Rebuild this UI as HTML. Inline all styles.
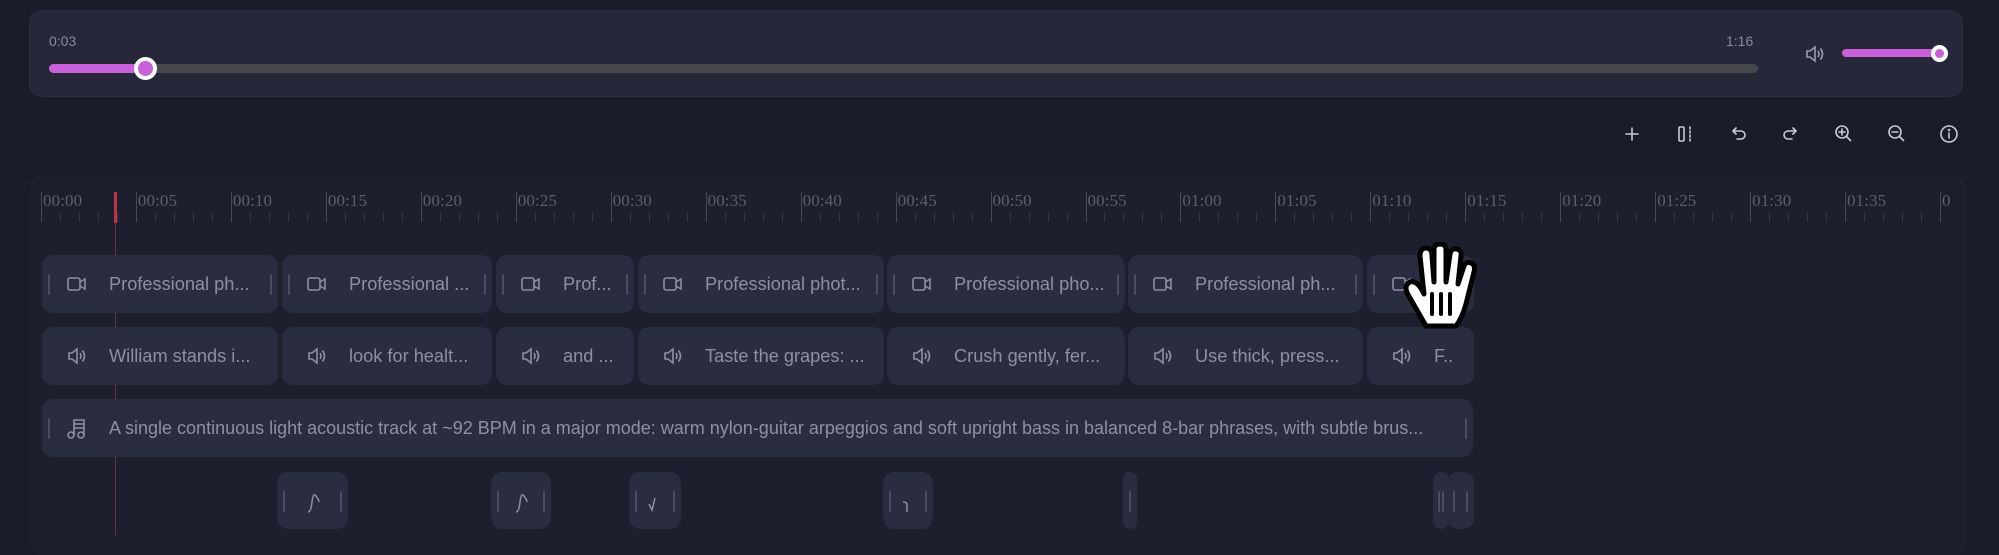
<!DOCTYPE html>
<html><head><meta charset="utf-8"><style>
*{margin:0;padding:0;box-sizing:border-box}
body{width:1999px;height:548px;background:#1b1c29;overflow:hidden;position:relative;font-family:"Liberation Sans","DejaVu Sans",sans-serif}
.abs{position:absolute}
.panel{left:29px;top:10px;width:1934px;height:87px;background:#262839;border:1px solid #2c2e40;border-radius:13px}
.t{color:#8a8c9a;font-size:14px}
.tl{left:29px;top:175px;width:1937px;height:380px;background:#1e1f2e;border-radius:12px}
.lab{position:absolute;top:191px;font-family:"Liberation Serif",serif;font-size:17px;color:#5c5e6e;letter-spacing:0.1px}
.tick{position:absolute;width:1px;background:#45475a}
.clip{position:absolute;background:#2a2c3f;border-radius:11px;height:58px}
.h{position:absolute;top:19px;width:2px;height:21px;background:#4c4e60;border-radius:1px}
.ct{position:absolute;top:0;left:67px;line-height:58px;font-size:18.2px;color:#8e90a2;white-space:nowrap}
.ic{position:absolute;top:18px;left:24px}
</style></head><body>
<div class="abs panel"></div>
<div class="abs t" style="left:49px;top:33px">0:03</div>
<div class="abs t" style="left:1726px;top:33px">1:16</div>
<div class="abs" style="left:49px;top:64px;width:1709px;height:9px;background:#47484d;border-radius:5px"></div>
<div class="abs" style="left:49px;top:64px;width:96px;height:9px;background:#c95fd9;border-radius:5px"></div>
<div class="abs" style="left:134px;top:57px;width:23px;height:23px;background:#c95fd9;border:4px solid #fff;border-radius:50%"></div>
<svg class="abs" style="left:1804px;top:43px" width="22" height="22" viewBox="0 0 22 22" fill="none" stroke="#9a9cab" stroke-width="1.6"><path d="M3 8h3l5-4v14l-5-4H3z"/><path d="M14 8q2 3 0 6M16.5 5.5q4 5.5 0 11"/></svg>
<div class="abs" style="left:1842px;top:49px;width:98px;height:8px;background:#c95fd9;border-radius:4px"></div>
<div class="abs" style="left:1931px;top:45px;width:17px;height:17px;background:#c95fd9;border:4px solid #fff;border-radius:50%"></div>

<svg class="abs" style="left:1620px;top:122px" width="345" height="24" viewBox="0 0 345 24" fill="none" stroke="#c8cad6" stroke-width="1.6" stroke-linecap="round">
<path d="M12 6v12M6 12h12"/>
<rect x="59" y="5" width="5" height="14" rx="1"/><path d="M70 5v14" stroke-dasharray="2 2"/>
<path d="M113 9h8a4 4 0 0 1 0 8h-4M113 9l3-3M113 9l3 3"/>
<path d="M176 9h-8a4 4 0 0 0 0 8h4M176 9l-3-3M176 9l-3 3"/>
<circle cx="222" cy="10" r="6"/><path d="M226.5 14.5l4 4M222 7v6M219 10h6"/>
<circle cx="275" cy="10" r="6"/><path d="M279.5 14.5l4 4M272 10h6"/>
<circle cx="329" cy="12" r="8"/><path d="M329 11v5"/><circle cx="329" cy="8" r="0.5"/>
</svg>

<div class="abs tl"></div>
<div id="ruler"></div>
<div class="abs" style="left:114px;top:192px;width:3px;height:31px;background:#c0304a"></div>
<div class="abs" style="left:115px;top:223px;width:1px;height:312px;background:#6a3348"></div>

<div id="rows"></div>
<svg class="abs" style="left:1396px;top:242px" width="86" height="88" viewBox="0 0 86 88">
<path d="M30 84 L14 56 Q6 44 14 40 Q20 38 26 48 L28 52 L24 14 Q24 6 30 6 Q36 6 36 14 L38 40 L38 8 Q38 2 44 2 Q50 2 50 8 L50 40 L54 12 Q55 6 61 7 Q66 8 65 14 L62 42 L68 24 Q70 19 75 21 Q80 23 78 30 L70 62 Q66 76 60 84 Z" fill="#fff" stroke="#000" stroke-width="5" stroke-linejoin="round"/>
<path d="M36 52v20M45 52v20M54 52v20" stroke="#000" stroke-width="4" stroke-linecap="round"/>
</svg>
<script>
var r='';
var labs=['00:00','00:05','00:10','00:15','00:20','00:25','00:30','00:35','00:40','00:45','00:50','00:55','01:00','01:05','01:10','01:15','01:20','01:25','01:30','01:35','0'];
for(var i=0;i<21;i++){var x=41+i*94.95;r+='<div class="tick" style="left:'+x.toFixed(1)+'px;top:192px;height:30px"></div><div class="lab" style="left:'+(x+2).toFixed(1)+'px">'+labs[i]+'</div>';
if(i<20)for(var j=1;j<5;j++)r+='<div class="tick" style="left:'+(x+j*18.99).toFixed(1)+'px;top:213px;height:9px;background:#34364a"></div>';}
document.getElementById('ruler').innerHTML=r;
var cam='<svg class="ic" width="22" height="22" viewBox="0 0 22 22" fill="none" stroke="#8e90a2" stroke-width="1.6"><rect x="2" y="5" width="12" height="12" rx="2"/><path d="M14 9l5-3v10l-5-3"/></svg>';
var spk='<svg class="ic" width="24" height="22" viewBox="0 0 24 22" fill="none" stroke="#8e90a2" stroke-width="1.6"><path d="M3 8h3l5-4v14l-5-4H3z"/><path d="M14 8q2 3 0 6M16.5 5.5q4 5.5 0 11"/></svg>';
var mus='<svg class="ic" width="22" height="24" viewBox="0 0 22 24" fill="none" stroke="#8e90a2" stroke-width="1.6"><circle cx="5" cy="18" r="3"/><circle cx="15" cy="18" r="3"/><path d="M8 18V3h10v15M8 7h10M8 11h10"/></svg>';
var xs=[[42,278],[282,492],[496,634],[638,884],[887,1125],[1128,1363],[1367,1474]];
var t1=['Professional ph...','Professional ...','Prof...','Professional phot...','Professional pho...','Professional ph...',''];
var t2=['William stands i...','look for healt...','and ...','Taste the grapes: ...','Crush gently, fer...','Use thick, press...','F..'];
var h='';
for(var i=0;i<7;i++){var a=xs[i][0],w=xs[i][1]-a;
h+='<div class="clip" style="left:'+a+'px;top:255px;width:'+w+'px"><div class="h" style="left:6px"></div>'+cam+'<div class="ct">'+t1[i]+'</div>'+(i<6?'<div class="h" style="right:6px"></div>':'')+'</div>';
h+='<div class="clip" style="left:'+a+'px;top:327px;width:'+w+'px">'+spk+'<div class="ct">'+t2[i]+'</div></div>';}
h+='<div class="clip" style="left:42px;top:399px;width:1431px"><div class="h" style="left:6px"></div>'+mus+'<div class="ct" style="font-size:18px">A single continuous light acoustic track at ~92 BPM in a major mode: warm nylon-guitar arpeggios and soft upright bass in balanced 8-bar phrases, with subtle brus...</div><div class="h" style="right:6px"></div></div>';
var sm=[[277,348,'M9 26q3 0 4-10t4-6 3 6'],[491,551,'M9 26q3 0 4-10t4-6 3 6'],[629,681,'M8 18l3 6 3-12'],[883,933,'M9 16q3 0 4 2v8']];
for(var i=0;i<sm.length;i++){var a=sm[i][0],w=sm[i][1]-a;
h+='<div class="clip" style="left:'+a+'px;top:472px;width:'+w+'px;height:57px"><div class="h" style="left:6px"></div><svg class="abs" style="left:'+(w/2-14)+'px;top:14px" width="28" height="30" fill="none" stroke="#8e90a2" stroke-width="1.5"><path d="'+sm[i][2]+'"/></svg><div class="h" style="right:6px"></div></div>';}
h+='<div class="clip" style="left:1123px;top:472px;width:14px;height:57px"><div class="h" style="left:6px"></div></div>';
h+='<div class="clip" style="left:1433px;top:472px;width:16px;height:57px"><div class="h" style="left:5px"></div><div class="h" style="left:9px"></div></div>';
h+='<div class="clip" style="left:1447px;top:472px;width:27px;height:57px"><div class="h" style="left:6px"></div><div class="h" style="right:6px"></div></div>';
document.getElementById('rows').innerHTML=h;
</script>
</body></html>
